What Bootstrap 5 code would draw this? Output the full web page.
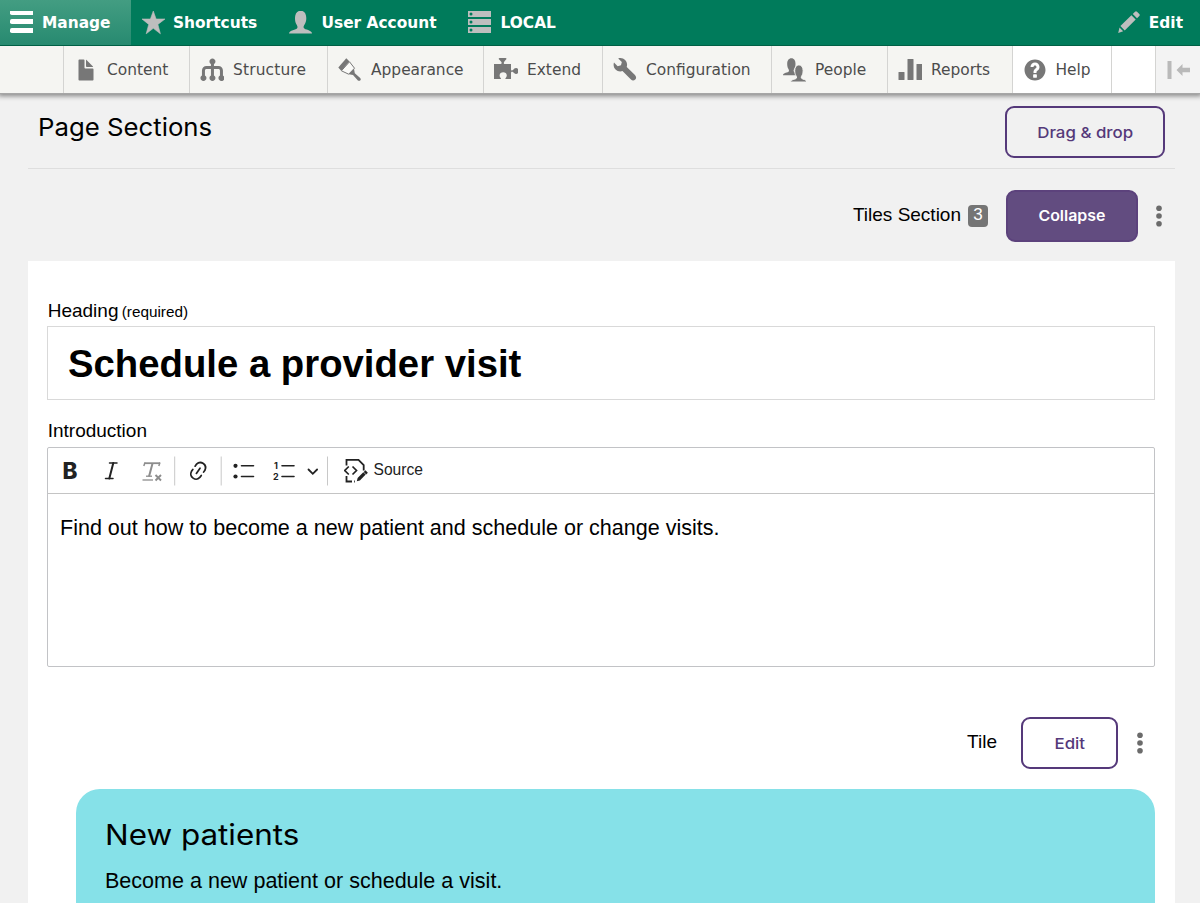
<!DOCTYPE html>
<html lang="en">
<head>
<meta charset="utf-8">
<meta name="viewport" content="width=device-width, initial-scale=1">
<title>Page Sections</title>
<link href="https://cdn.jsdelivr.net/npm/bootstrap@5.3.0/dist/css/bootstrap.min.css" rel="stylesheet">
<style>
body{font-family:"Liberation Sans",Arial,sans-serif;background:#f1f1f1;color:#000;height:903px;overflow:hidden;font-size:19px;line-height:1.2}
.topbar{height:46px;background:#007b5b;border-bottom:1px solid #006045;font:bold 15.4px "DejaVu Sans",sans-serif;color:#fff;position:relative;z-index:3}
.topbar a,.tray a{color:inherit;text-decoration:none;white-space:nowrap}
.topbar a{height:45px;gap:8px;padding-left:9px}
.topbar svg,.tray svg{width:24px;height:24px;flex:none}
.topbar .active{background:linear-gradient(#439d82,#278a70);width:131px}
.tray{height:48px;background:#f5f5f2;border-bottom:1px solid #a6a6a6;box-shadow:0 0 5px 2px rgba(0,0,0,.45);font:15.43px "DejaVu Sans",sans-serif;color:#4c4c4c;position:relative;z-index:2}
.tray a{height:47px;gap:9px;padding-left:10px;border-left:1px solid #d4d4d2}
.tray a span{padding-top:1px}
.tray svg{fill:#777}
.wide{font-family:Inter,sans-serif;transform-origin:left center}
.sections{padding:0 25px 0 28px}
.sections-head{height:75px;border-bottom:1px solid #dedede;padding:0 10px}
.sections-head h2{font-size:24.3px;font-weight:400;margin:19px 0 0;transform:scaleX(1.06)}
.act{height:52px;border:2px solid #55397a;border-radius:9px;color:#55397a;font:500 15.2px Inter,sans-serif;padding:0}
.act span{display:inline-block;transform:scaleX(1.11)}
.act.solid{background:#624c80;color:#fff;font-weight:600;border-color:#5c427c}
.act.solid span{transform:scaleX(1.05)}
.count{width:20px;height:22px;border-radius:4px;background:#757575;color:#fff;font-size:17px}
.panel{background:#fff;height:642px;padding:39px 20px 0 19px}
.title-input{height:74px;border:1px solid #d9d9d9;font-size:38.3px;font-weight:700;padding:2px 20px 0;color:#000;border-radius:0}
.editor{height:220px;border:1px solid #c2c3c6;border-radius:2px}
.tools{height:46px;border-bottom:1px solid #c4c4c4;font-size:15.5px;color:#222}
.tools svg{display:block;flex:none}
.tile{background:#86e1e8;border-radius:24px 24px 0 0;height:115px;margin-left:29px;padding:28px 29px}
.tile h3{font-size:28.8px;line-height:36px;font-weight:400;margin:0;transform:scaleX(1.09)}
</style>
</head>
<body>
<nav class="topbar d-flex">
 <a href="#" class="active d-flex align-items-center"><svg viewBox="0 0 24 24" fill="#fff"><rect x="1" y="-1" width="24" height="5" rx="1.8"/><rect x="1" y="8" width="24" height="5" rx="1.8"/><rect x="1" y="17" width="24" height="5" rx="1.8"/></svg><span style="margin-left:1px">Manage</span></a>
 <a href="#" class="d-flex align-items-center" style="width:148px;padding-left:10px"><svg viewBox="0 0 24 24" fill="#bebebe"><path d="M12.3 0 15.1 8H24l-7.1 5.4 2.5 9.4-7.1-5.5-7.1 5.5 2.5-9.4L1 8h8.4z" stroke="#bebebe" stroke-width=".6" stroke-linejoin="round"/></svg><span>Shortcuts</span></a>
 <a href="#" class="d-flex align-items-center" style="width:179px;padding-left:10px"><svg viewBox="0 0 24 24" fill="#bebebe"><path d="M0 22.5c0-3.5 7.500-3.700 8.300-5.600.5-1.500-.2-2.300-.8-3.400C6.300 11.500 6 9.700 6 7c0-4 2-7.300 5.700-7.300S17.300 3 17.300 7c0 2.700-.5 4.600-1.700 6.500-.6 1.100-1.400 2-.8 3.500.8 1.800 8.200 2 8.200 5.500z"/></svg><span style="margin-left:.5px">User Account</span></a>
 <a href="#" class="d-flex align-items-center"><svg viewBox="0 0 24 24"><path fill="#bebebe" d="M1 0h24v6H1zM1 8h24v6H1zM1 16h24v6H1z"/><g fill="#007b5b"><circle cx="4" cy="3" r="1.5"/><circle cx="4" cy="11" r="1.5"/><circle cx="4" cy="19" r="1.5"/></g></svg><span style="margin-left:1.5px">LOCAL</span></a>
 <a href="#" class="d-flex align-items-center ms-auto" style="padding-right:17px"><svg viewBox="0 0 24 24" fill="#bebebe"><path d="M15.800 2.900 18 .8q1-.9 2 0L22.300 3q.9 1 0 2L20 7.300zM14.400 4.200 18.700 8.500 7.700 19.400 3.400 15.100zM2.500 16.600 6.200 20.200 1.200 22z"/></svg><span>Edit</span></a>
</nav>
<nav class="tray d-flex">
 <a href="#" class="d-flex align-items-center" style="margin-left:63px;width:126px"><svg viewBox="0 0 16 16"><path d="M12.502 7h-5c-.276 0-.502-.225-.502-.5v-5c0-.275-.225-.5-.5-.5h-3c-.275 0-.5.225-.5.5v13c0 .276.225.5.5.5h9c.275 0 .5-.224.5-.5v-7c0-.275-.225-.5-.498-.5z"/><path d="M8.502 6h4c.275 0 .34-.159.146-.354l-4.293-4.292c-.195-.195-.353-.129-.353.146v4c0 .275.225.5.5.5z"/></svg><span>Content</span></a>
 <a href="#" class="d-flex align-items-center" style="width:138px"><svg viewBox="0 0 16 16"><path d="M15.002 11.277v-3.277c0-1.654-1.346-3-3-3h-3v-1.277c.596-.347 1-.984 1-1.723 0-1.104-.896-2-2-2s-2 .896-2 2c0 .738.404 1.376 1 1.723v1.277h-3c-1.654 0-3 1.346-3 3v3.277c-.596.347-1 .984-1 1.723 0 1.104.896 2 2 2s2-.896 2-2c0-.738-.404-1.376-1-1.723v-3.277c0-.552.449-1 1-1h3v4.277c-.596.347-1 .984-1 1.723 0 1.104.896 2 2 2s2-.896 2-2c0-.738-.404-1.376-1-1.723v-4.277h3c.551 0 1 .448 1 1v3.277c-.596.346-1 .984-1 1.723 0 1.104.896 2 2 2s2-.896 2-2c0-.738-.404-1.376-1-1.723z" transform="translate(.3 .4)"/></svg><span style="letter-spacing:.15px">Structure</span></a>
 <a href="#" class="d-flex align-items-center" style="width:156px"><svg viewBox="0 0 24 24"><path d="M.3 9.500 8.300.3l3.200 3.200-8.300 9.300z"/><path d="M3.400 12.800 11.500 3.800l5 6.400-5.800 6z" fill="#fafaf8" stroke="#777" stroke-width="1"/><path d="m10.700 16.300 5.300-5.600.8 4.600 5.400 4.700q1.200 1.300.2 2.300t-2.500.2l-4.900-5.400z"/></svg><span>Appearance</span></a>
 <a href="#" class="d-flex align-items-center" style="width:119px"><svg viewBox="0 0 24 24"><path d="M0 6h6.700c1.500 0 1-1.800.3-2.600C5.700 2 4.700 1.700 4.700.8q0-.8 1-.8h5.800q1 0 1 .8c0 .9-1 1.200-2.100 2.600-.7.8-1.100 2.600.4 2.600H17v5.200c0 1.500 1.300 1.400 2 .7 1-1 1.700-1.900 3-1.900 1.500 0 2.500 1.300 2.500 3s-1 3-2.500 3c-1.300 0-2-.9-3-1.900-.7-.7-2-.7-2 .8v6.200h-5.500c-.8-.7 1.300-1.700 1.300-3.600 0-2-1.700-3.200-3.600-3.200s-3.600 1.200-3.600 3.200 2 2.900 1.300 3.600H0z"/></svg><span>Extend</span></a>
 <a href="#" class="d-flex align-items-center" style="width:169px"><svg viewBox="0 0 16 16"><path transform="translate(.4 0)" d="M14.416 11.586l-.01-.008v-.001l-5.656-5.656c.15-.449.252-.921.252-1.421 0-2.485-2.016-4.500-4.502-4.500-.505 0-.981.102-1.434.255l2.431 2.431-.588 2.196-2.196.588-2.445-2.445c-.162.464-.268.956-.268 1.475 0 2.486 2.014 4.500 4.500 4.500.5 0 .972-.102 1.421-.251l5.667 5.665c.781.781 2.047.781 2.828 0s.781-2.047 0-2.828z"/></svg><span>Configuration</span></a>
 <a href="#" class="d-flex align-items-center" style="width:116px"><svg viewBox="0 0 24 24"><g transform="translate(1 0)"><path d="M0 17.200c0-2.700 5.200-2.500 5.900-4 .3-1-.2-1.600-.6-2.400-.8-1.400-1.100-2.800-1.100-5C4.200 2.600 5.700.2 8.400.2s4.100 2.400 4.100 5.600c0 2.200-.4 3.600-1.200 5-.4.8-.9 1.400-.6 2.400.7 1.500 5.800 1.300 5.800 4z"/><path d="M7.500 24c0-2.700 5.400-2.500 6-4 .3-1-.2-1.600-.6-2.400-.8-1.400-1.200-2.800-1.200-5 0-3.200 1.500-5.700 4.200-5.700s4.200 2.500 4.200 5.700c0 2.200-.4 3.600-1.200 5-.4.8-.9 1.400-.6 2.400.7 1.500 5.700 1.300 5.700 4z" stroke="#f5f5f2" stroke-width="1"/></g></svg><span>People</span></a>
 <a href="#" class="d-flex align-items-center" style="width:125px"><svg viewBox="0 0 24 24"><rect x=".5" y="14" width="6" height="8" rx=".6"/><rect x="9.500" y="1" width="6" height="21" rx=".6"/><rect x="18.500" y="6" width="6" height="16" rx=".6"/></svg><span>Reports</span></a>
 <a href="#" class="d-flex align-items-center bg-white" style="width:99px"><svg viewBox="0 0 16 16"><path d="M8.002 1c-3.868 0-7.002 3.134-7.002 7s3.134 7 7.002 7c3.865 0 7-3.134 7-7s-3.135-7-7-7zm3 5c0 .551-.16 1.085-.477 1.586l-.158.22c-.07.093-.189.241-.361.393-.168.148-.35.299-.545.447l-.203.189-.141.129-.096.17-.021.235v.63h-2.001v-.704c.026-.396.078-.73.204-.999.125-.269.271-.498.439-.688l.225-.21-.01-.015.176-.14.137-.128c.186-.139.357-.277.516-.417l.148-.18c.098-.152.168-.323.168-.518 0-.552-.447-1-1-1s-1.002.448-1.002 1h-2c0-1.657 1.343-3 3.002-3 1.656 0 3 1.343 3 3zm-1.750 6.619c0 .344-.281.625-.625.625h-1.250c-.345 0-.626-.281-.626-.625v-1.238c0-.344.281-.625.626-.625h1.250c.344 0 .625.281.625.625v1.238z"/></svg><span style="margin-left:-.5px">Help</span></a>
 <a href="#" class="bg-white" style="width:44px" aria-label="Empty"></a>
 <a href="#" class="d-flex align-items-center" style="width:45px;background:#f3f3f3" aria-label="Vertical orientation"><svg viewBox="0 0 24 24" style="fill:#b9b9b9"><path d="M1.500 3h4v18h-4zM10.500 12l6-6v3.800H24v4.400h-7.500V18z"/></svg></a>
</nav>
<main class="sections">
 <div class="sections-head d-flex justify-content-between">
  <h2 class="wide">Page Sections</h2>
  <button class="btn act" style="width:160px;margin-top:12px"><span>Drag &amp; drop</span></button>
 </div>
 <div class="d-flex align-items-center justify-content-end" style="height:92px;padding:1px 13px 0 0">
  <span>Tiles Section</span><span class="count d-flex align-items-center justify-content-center" style="margin:0 18px 0 7px">3</span>
  <button class="btn act solid" style="width:132px"><span>Collapse</span></button>
  <svg width="6" height="24" viewBox="0 0 6 24" fill="#6b6b6b" style="margin-left:18px"><circle cx="3" cy="4.200" r="2.800"/><circle cx="3" cy="12" r="2.800"/><circle cx="3" cy="19.800" r="2.800"/></svg>
 </div>
 <section class="panel">
  <label class="d-block" style="height:26px;padding-left:.7px">Heading <span style="font-size:15.3px;margin-left:-2px">(required)</span></label>
  <div class="title-input d-flex align-items-center">Schedule a provider visit</div>
  <label class="d-block" style="height:47px;padding:20px 0 0 .7px">Introduction</label>
  <div class="editor">
   <div class="tools d-flex align-items-center">
    <svg width="300" height="45" viewBox="48 447.500 300 45" fill="none" stroke="#222" stroke-width="1.500">
     <text x="62.500" y="478" font-family="Inter" font-weight="800" font-size="22.500" fill="#222" stroke="none">B</text>
     <g stroke-linecap="round"><line x1="109.500" y1="462.500" x2="117" y2="462.500"/><line x1="105.500" y1="478" x2="113" y2="478"/><line x1="113.300" y1="462.500" x2="109.300" y2="478" stroke-width="2"/></g>
     <g stroke="#8d8d8d"><line x1="144.500" y1="462.700" x2="160" y2="462.700" stroke-width="1.800"/><line x1="145" y1="462" x2="143.800" y2="465.500"/><line x1="160" y1="462" x2="158.800" y2="465.500"/><line x1="152.500" y1="463" x2="149" y2="476" stroke-width="2"/><line x1="146" y1="475.700" x2="152" y2="475.700" stroke-width="1.300"/><line x1="142.500" y1="479.500" x2="153" y2="479.500" stroke-width="1.300"/><path d="m155.500 474.500 5.500 5.500m0-5.500-5.500 5.500" stroke-width="1.900"/></g>
     <path transform="translate(186.700 458.800) scale(1.150)" fill="#222" stroke="none" d="m11.077 15 .991-1.416a.75.75 0 1 1 1.229.86l-1.148 1.640a.748.748 0 0 1-.217.206 5.251 5.251 0 0 1-8.503-5.955.741.741 0 0 1 .12-.274l1.147-1.639a.75.75 0 1 1 1.228.86L4.933 10.700l.006.003a3.750 3.750 0 0 0 6.132 4.294l.006.004zm5.494-5.335a.748.748 0 0 1-.12.274l-1.147 1.639a.75.75 0 1 1-1.228-.86l.86-1.230a3.750 3.750 0 0 0-6.144-4.301l-.86 1.229a.75.75 0 0 1-1.229-.86l1.148-1.640a.748.748 0 0 1 .217-.206 5.251 5.251 0 0 1 8.503 5.955zm-4.563-2.532a.75.75 0 0 1 .184 1.045l-3.155 4.505a.75.75 0 1 1-1.229-.86l3.155-4.506a.75.75 0 0 1 1.045-.184z"/>
     <path d="M174.700 456v29M221.200 456v29M327.500 456v29" stroke="#c8c8c8" stroke-width="1"/>
     <circle cx="235.500" cy="465.300" r="2.100" fill="#222" stroke="none"/><circle cx="235.500" cy="476" r="2.100" fill="#222" stroke="none"/>
     <path d="M241.500 465.300h12M241.500 476h12M282 465.300h12M282 476h12" stroke-width="1.600" stroke-linecap="round"/>
     <g font-family="Inter" font-weight="700" font-size="9" fill="#222" stroke="none"><text x="274" y="468.300">1</text><text x="273" y="479.700">2</text></g>
     <path d="m308.500 469 4.300 4.300 4.300-4.300" stroke-width="1.800" stroke-linecap="round"/>
    </svg>
    <svg width="25" height="45" viewBox="344 447.500 25 45" fill="none" stroke="#222" stroke-width="1.800" style="margin-left:-4.500px"><path d="M346.500 465v-5.700H358.500l5.200 5.400v5.300M346.500 475.500v5.500h5.500M354 481h.8"/><path d="m348.800 466-4 4 4 4M352.500 466l4 4-4 4" stroke-width="1.700"/><path d="m356.800 480.800.8-3.400 5.700-5.700 2.400 2.400-5.800 5.800z" fill="#222" stroke="none"/><path d="m364.600 470.700 2.400 2.400" stroke-width="2.400"/></svg>
    <span style="margin-left:5px;font-size:15.600px">Source</span>
   </div>
   <div style="font-size:21.540px;padding:22px 12px">Find out how to become a new patient and schedule or change visits.</div>
  </div>
  <div class="d-flex align-items-center justify-content-end" style="height:52px;margin-top:50px;padding-right:12px">
   <span style="margin-right:24px;padding-bottom:2px">Tile</span>
   <button class="btn act" style="width:97px"><span>Edit</span></button>
   <svg width="6" height="24" viewBox="0 0 6 24" fill="#6b6b6b" style="margin-left:19px"><circle cx="3" cy="4.200" r="2.800"/><circle cx="3" cy="12" r="2.800"/><circle cx="3" cy="19.800" r="2.800"/></svg>
  </div>
  <article class="tile" style="margin-top:19.500px">
   <h3 class="wide">New patients</h3>
   <div style="font-size:21.540px;margin-top:16px">Become a new patient or schedule a visit.</div>
  </article>
 </section>
</main>
<script src="https://cdn.jsdelivr.net/npm/bootstrap@5.3.0/dist/js/bootstrap.bundle.min.js"></script>
</body>
</html>
